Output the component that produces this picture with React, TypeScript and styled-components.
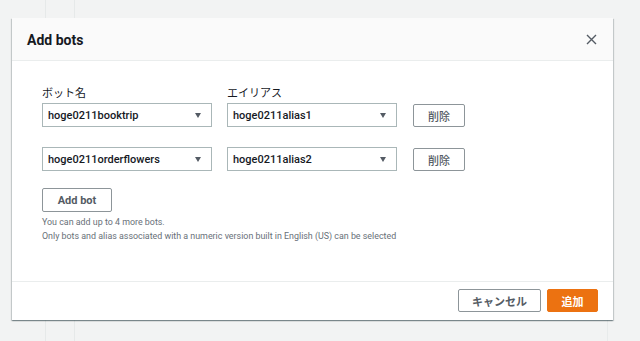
import React from "react";
import styled, { createGlobalStyle } from "styled-components";

const GlobalStyle = createGlobalStyle`
  html, body { margin: 0; padding: 0; }
  body {
    background: #f2f3f3;
    font-family: Roboto, "Noto Sans CJK JP", sans-serif;
    color: #16191f;
  }
`;

const Page = styled.div`
  position: relative;
  width: 640px;
  height: 341px;
  overflow: hidden;
  background: #f2f3f3;
  display: flex;
`;

const NavRail = styled.div<{ $w: number }>`
  width: ${(p) => p.$w}px;
  flex: none;
  border-right: 1px solid #e6e9e9;
`;

const BackContent = styled.div`
  flex: 1;
  padding: 18px 32px 0 17px;
  display: flex;
`;

const BackCard = styled.div`
  flex: 1;
  border-top: 1px solid #e8ebeb;
  border-right: 1px solid #e8ebeb;
`;

const Overlay = styled.div`
  position: absolute;
  inset: 0;
  padding: 18px 0 0 12px;
`;

const Modal = styled.div`
  width: 601px;
  height: 302px;
  background: #fff;
  display: flex;
  flex-direction: column;
  box-shadow: 0 1px 1px 0 rgba(0, 28, 36, 0.3), 1px 1px 1px 0 rgba(0, 28, 36, 0.15),
    -1px 1px 1px 0 rgba(0, 28, 36, 0.15);
`;

const Header = styled.div`
  height: 42px;
  flex: none;
  background: #fafafa;
  border-bottom: 1px solid #eaeded;
  display: flex;
  align-items: center;
  justify-content: space-between;
  padding: 0 16px 0 15px;
`;

const Title = styled.h2`
  margin: 0;
  font-size: 14px;
  font-weight: 700;
  color: #16191f;
  padding-top: 2px;
`;

const CloseButton = styled.button`
  border: 0;
  background: none;
  padding: 0;
  width: 12px;
  height: 12px;
  display: flex;
  align-items: center;
  justify-content: center;
  color: #545b64;
`;

const Body = styled.div`
  flex: 1;
  padding: 25px 30px 0 30px;
`;

const FormGrid = styled.div`
  display: grid;
  grid-template-columns: 170px 170px 52px;
  column-gap: 15px;
  align-items: end;
`;

const Label = styled.div`
  font-size: 11px;
  line-height: 16px;
  margin-bottom: 1px;
  color: #16191f;
`;

const Field = styled.div<{ $gapTop?: number }>`
  margin-top: ${(p) => p.$gapTop ?? 0}px;
`;

const Select = styled.div`
  height: 24px;
  box-sizing: border-box;
  border: 1px solid #aab7b8;
  display: flex;
  align-items: center;
  justify-content: space-between;
  padding: 0 10px 0 5px;
  font-size: 11px;
  font-weight: 500;
  color: #16191f;
`;

const Caret = styled.span`
  width: 0;
  height: 0;
  border-left: 3.5px solid transparent;
  border-right: 3.5px solid transparent;
  border-top: 5px solid #545b64;
`;

const Button = styled.button<{ $primary?: boolean; $w: number }>`
  width: ${(p) => p.$w}px;
  height: 23px;
  box-sizing: border-box;
  border: 1px solid ${(p) => (p.$primary ? "#ec7211" : "#8d9599")};
  border-radius: 2px;
  background: ${(p) => (p.$primary ? "#ec7211" : "#fff")};
  color: ${(p) => (p.$primary ? "#fff" : "#545b64")};
  font-family: Roboto, "Noto Sans CJK JP", sans-serif;
  font-size: 11px;
  font-weight: 700;
  padding: 0;
  display: flex;
  align-items: center;
  justify-content: center;
`;

const DeleteButton = styled(Button)`
  margin-left: 1px;
  font-weight: 500;
`;

const AddButton = styled(Button)`
  margin-top: 17px;
  height: 24px;
`;

const Hint = styled.div<{ $first?: boolean }>`
  font-size: 8.9px;
  line-height: 14px;
  color: #687078;
  margin-top: ${(p) => (p.$first ? 3 : 0)}px;
`;

const Footer = styled.div`
  height: 39px;
  flex: none;
  border-top: 1px solid #eaeded;
  display: flex;
  justify-content: flex-end;
  align-items: flex-start;
  gap: 6px;
  padding: 7px 15px 0 0;
  box-sizing: border-box;
`;

const rows = [
  { bot: "hoge0211booktrip", alias: "hoge0211alias1" },
  { bot: "hoge0211orderflowers", alias: "hoge0211alias2" },
];

export default function App() {
  return (
    <>
      <GlobalStyle />
      <Page>
        <NavRail $w={45} />
        <NavRail $w={28} />
        <BackContent>
          <BackCard />
        </BackContent>
        <Overlay>
          <Modal>
            <Header>
              <Title>Add bots</Title>
              <CloseButton aria-label="close">
                <svg width="11" height="11" viewBox="0 0 11 11">
                  <path d="M1 1L10 10M10 1L1 10" stroke="#545b64" strokeWidth="1.4" />
                </svg>
              </CloseButton>
            </Header>
            <Body>
              <FormGrid>
                <Label>ボット名</Label>
                <Label>エイリアス</Label>
                <div />
                {rows.map((r, i) => (
                  <React.Fragment key={r.bot}>
                    <Field $gapTop={i === 0 ? 0 : 20}>
                      <Select>
                        <span>{r.bot}</span>
                        <Caret />
                      </Select>
                    </Field>
                    <Field $gapTop={i === 0 ? 0 : 20}>
                      <Select>
                        <span>{r.alias}</span>
                        <Caret />
                      </Select>
                    </Field>
                    <Field $gapTop={i === 0 ? 0 : 20}>
                      <DeleteButton $w={52}>削除</DeleteButton>
                    </Field>
                  </React.Fragment>
                ))}
              </FormGrid>
              <AddButton $w={70}>Add bot</AddButton>
              <Hint $first>You can add up to 4 more bots.</Hint>
              <Hint>
                Only bots and alias associated with a numeric version built in English (US) can be
                selected
              </Hint>
            </Body>
            <Footer>
              <Button $w={83}>キャンセル</Button>
              <Button $primary $w={51}>
                追加
              </Button>
            </Footer>
          </Modal>
        </Overlay>
      </Page>
    </>
  );
}
